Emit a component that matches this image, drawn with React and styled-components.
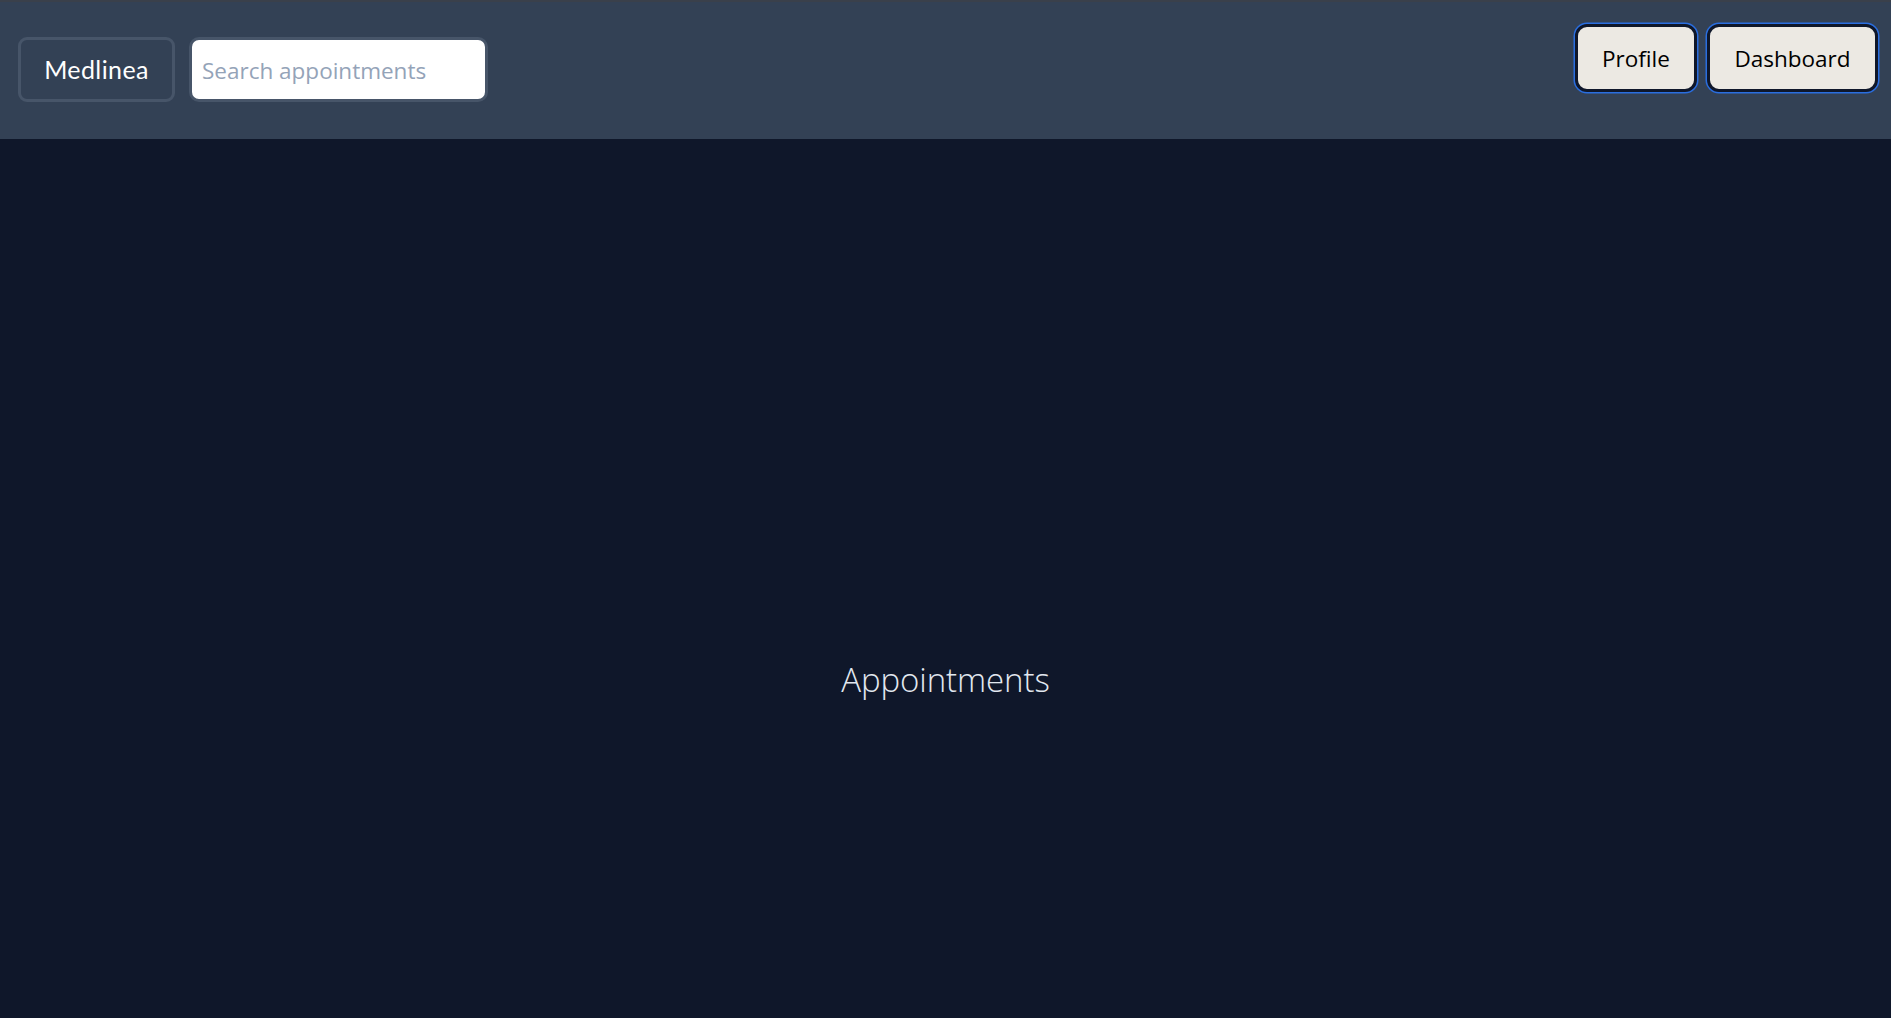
import React from "react";
import styled, { createGlobalStyle } from "styled-components";

const Global = createGlobalStyle`
  html, body { margin: 0; padding: 0; background: #0f172a; }
  body { font-family: "Open Sans", "Noto Sans", sans-serif; }
  * { box-sizing: border-box; }
`;

const Header = styled.header`
  height: 139px;
  background: #334155;
  border-top: 2px solid #3a404b;
  display: flex;
  align-items: flex-start;
  justify-content: space-between;
  padding: 0 13px 0 18px;
`;

const Left = styled.div`
  display: flex;
  align-items: center;
  gap: 14px;
  margin-top: 35px;
`;

const Brand = styled.div`
  width: 157px;
  height: 65px;
  border: 3px solid #475569;
  border-radius: 9px;
  display: flex;
  align-items: center;
  justify-content: center;
  padding-bottom: 2px;
  color: #ffffff;
  font-family: "Lato", "Open Sans", sans-serif;
  font-weight: 400;
  font-size: 25px;
  letter-spacing: 0.4px;
`;

const Search = styled.input`
  width: 299px;
  height: 65px;
  border: 3px solid #475569;
  border-radius: 10px;
  background: #ffffff;
  padding: 2px 10px 0;
  font-family: "Open Sans", "Noto Sans", sans-serif;
  font-size: 22.5px;
  color: #1e293b;
  outline: none;
  &::placeholder { color: #94a3b8; }
`;

const Right = styled.div`
  display: flex;
  gap: 10px;
  margin-top: 22px;
`;

const NavButton = styled.button`
  width: ${(p) => p.$w}px;
  height: 68px;
  background: #ece9e3;
  border: 3px solid #0f172a;
  border-radius: 12px;
  box-shadow: 0 0 0 1.5px #2a6ee0;
  color: #000000;
  font-family: "Open Sans", "Noto Sans", sans-serif;
  font-size: 22.5px;
  cursor: pointer;
`;

const Main = styled.main`
  height: 879px;
  padding-top: 202px;
  display: flex;
  align-items: center;
  justify-content: center;
`;

const Title = styled.h1`
  margin: 0;
  color: #e2e8f0;
  font-family: "Open Sans", "Noto Sans", sans-serif;
  font-weight: 300;
  font-size: 33px;
  letter-spacing: -0.1px;
`;

export default function App() {
  return (
    <>
      <Global />
      <Header>
        <Left>
          <Brand>Medlinea</Brand>
          <Search placeholder="Search appointments" />
        </Left>
        <Right>
          <NavButton $w={122}>Profile</NavButton>
          <NavButton $w={171}>Dashboard</NavButton>
        </Right>
      </Header>
      <Main>
        <Title>Appointments</Title>
      </Main>
    </>
  );
}
